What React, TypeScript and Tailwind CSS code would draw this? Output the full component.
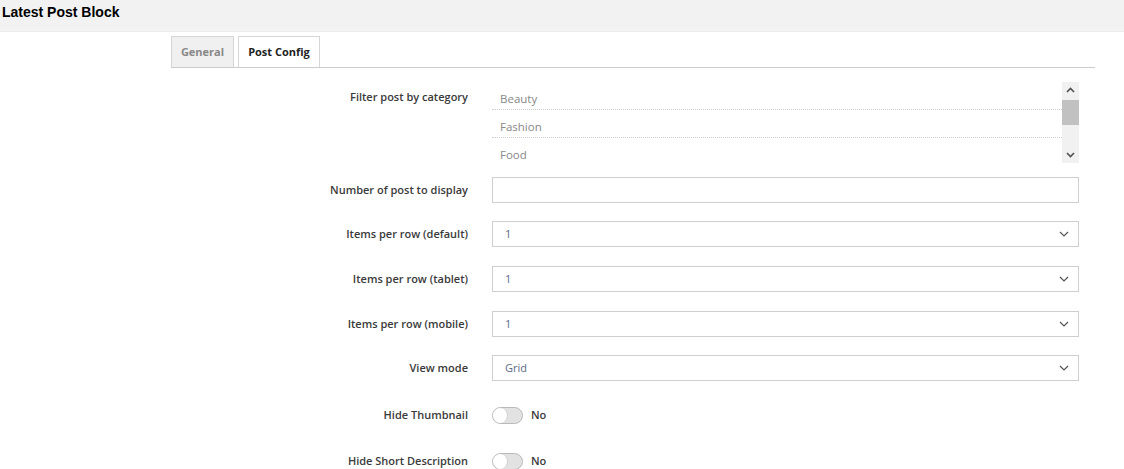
import React from 'react';

const font = { fontFamily: '"Open Sans", "Noto Sans", sans-serif' };

function Chevron() {
  return (
    <svg width="10" height="6" viewBox="0 0 10 6" className="absolute right-[9px] top-1/2 -translate-y-1/2">
      <path d="M1 1l4 4 4-4" fill="none" stroke="#555" strokeWidth="1.2" />
    </svg>
  );
}

function Row({ label, children, className = '' }: { label: string; children: React.ReactNode; className?: string }) {
  return (
    <div className={`flex items-center ${className}`}>
      <div className="w-[321px] pr-[24px] text-right text-[11px] font-semibold text-[#3a3a3a]">{label}</div>
      <div className="w-[587px]">{children}</div>
    </div>
  );
}

function Select({ value }: { value: string }) {
  return (
    <div className="relative h-[26px] border border-[#cfcfcf] bg-white flex items-center pl-[12px] text-[11px] text-[#5b6c86]">
      {value}
      <Chevron />
    </div>
  );
}

function Toggle() {
  return (
    <div className="flex items-center gap-[8px]">
      <div className="relative w-[31px] h-[17px] rounded-full border border-[#b9b9b9] bg-[#e2e2e2]">
        <div className="absolute left-0 top-0 w-[15px] h-[15px] rounded-full bg-white border-r border-[#d0d0d0]" />
      </div>
      <span className="text-[11px] font-semibold text-[#3a3a3a]">No</span>
    </div>
  );
}

export default function App() {
  const cats = ['Beauty', 'Fashion', 'Food'];
  return (
    <div className="w-[1124px] h-[469px] overflow-hidden bg-white" style={font}>
      <div className="h-[32px] bg-[#f2f2f2] border-b border-[#ececec] flex items-center pl-[2px] pb-[7px]">
        <h1 className="text-[14px] font-bold text-black" style={{ fontFamily: '"Liberation Sans", Arial, sans-serif' }}>
          Latest Post Block
        </h1>
      </div>

      <div className="ml-[171px] w-[924px] mt-[4px] flex gap-[4px] border-b border-[#cccccc]">
        <div className="h-[31px] w-[63px] flex items-center justify-center bg-[#f0f0f0] border border-b-0 border-[#d6d6d6] text-[11px] font-bold text-[#888]">
          General
        </div>
        <div className="h-[31px] w-[82px] flex items-center justify-center bg-white border border-b-0 border-[#d6d6d6] text-[11px] font-bold text-[#222]">
          Post Config
        </div>
      </div>

      <div className="mt-[14px] ml-[171px] flex flex-col">
        <div className="flex items-start">
          <div className="w-[321px] pr-[24px] pt-[7px] text-right text-[11px] font-semibold text-[#3a3a3a]">Filter post by category</div>
          <div className="relative w-[587px] h-[81px] overflow-hidden">
            <div className="pr-[17px]">
              {cats.map((c, i) => (
                <div
                  key={c}
                  className={`h-[28px] pt-[9px] pl-[8px] text-[11.5px] leading-[16px] text-[#888] ${i < 2 ? 'border-b border-dotted border-[#cfcfcf]' : ''}`}
                >
                  {c}
                </div>
              ))}
            </div>
            <div className="absolute right-0 top-0 w-[17px] h-[81px] bg-[#f1f1f1]">
              <svg width="17" height="17" viewBox="0 0 17 17" className="absolute top-0 left-0">
                <path d="M5 10l3.5-3.5L12 10" fill="none" stroke="#505050" strokeWidth="1.6" />
              </svg>
              <div className="absolute left-0 top-[18px] w-[17px] h-[25px] bg-[#c1c1c1]" />
              <svg width="17" height="17" viewBox="0 0 17 17" className="absolute bottom-0 left-0">
                <path d="M5 7l3.5 3.5L12 7" fill="none" stroke="#505050" strokeWidth="1.6" />
              </svg>
            </div>
          </div>
        </div>

        <Row label="Number of post to display" className="mt-[14px]">
          <div className="h-[26px] border border-[#cfcfcf] bg-white" />
        </Row>
        <Row label="Items per row (default)" className="mt-[18px]">
          <Select value="1" />
        </Row>
        <Row label="Items per row (tablet)" className="mt-[19px]">
          <Select value="1" />
        </Row>
        <Row label="Items per row (mobile)" className="mt-[19px]">
          <Select value="1" />
        </Row>
        <Row label="View mode" className="mt-[18px]">
          <Select value="Grid" />
        </Row>
        <Row label="Hide Thumbnail" className="mt-[21px]">
          <div className="h-[26px] flex items-center"><Toggle /></div>
        </Row>
        <Row label="Hide Short Description" className="mt-[20px]">
          <div className="h-[26px] flex items-center"><Toggle /></div>
        </Row>
      </div>
    </div>
  );
}
